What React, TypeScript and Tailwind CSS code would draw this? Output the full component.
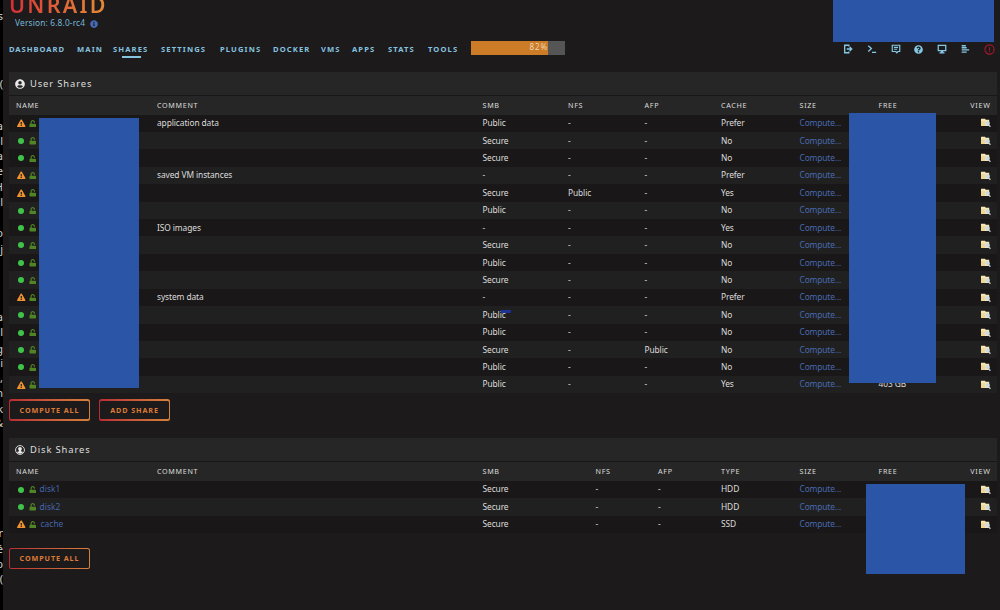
import { FaExclamationTriangle, FaQuestionCircle, FaUnlock, FaUserCircle, FaInfoCircle } from "react-icons/fa"

type Share = {
  name?: string
  warn?: boolean
  comment?: string
  smb: string
  nfs?: string
  afp?: string
  cache: string
  free?: string
}

const userShares: Share[] = [
  { warn: true, comment: "application data", smb: "Public", cache: "Prefer" },
  { smb: "Secure", cache: "No" },
  { smb: "Secure", cache: "No" },
  { warn: true, comment: "saved VM instances", smb: "-", cache: "Prefer" },
  { warn: true, smb: "Secure", nfs: "Public", cache: "Yes" },
  { smb: "Public", cache: "No" },
  { comment: "ISO images", smb: "-", cache: "Yes" },
  { smb: "Secure", cache: "No" },
  { smb: "Public", cache: "No" },
  { smb: "Secure", cache: "No" },
  { warn: true, comment: "system data", smb: "-", cache: "Prefer" },
  { smb: "Public", cache: "No" },
  { smb: "Public", cache: "No" },
  { smb: "Secure", afp: "Public", cache: "No" },
  { smb: "Public", cache: "No" },
  { warn: true, smb: "Public", cache: "Yes", free: "403 GB" },
]

const diskShares: Share[] = [
  { name: "disk1", smb: "Secure", cache: "HDD" },
  { name: "disk2", smb: "Secure", cache: "HDD" },
  { name: "cache", warn: true, smb: "Secure", cache: "SSD" },
]

const nav = [
  { label: "DASHBOARD", width: "w-[68px] tracking-[0.950px]" },
  { label: "MAIN", width: "w-[36px]" },
  { label: "SHARES", width: "w-[48px]" },
  { label: "SETTINGS", width: "w-[59px]" },
  { label: "PLUGINS", width: "w-[53px]" },
  { label: "DOCKER", width: "w-[48px]" },
  { label: "VMS", width: "w-[31px]" },
  { label: "APPS", width: "w-[36px]" },
  { label: "STATS", width: "w-[40px]" },
  { label: "TOOLS", width: "w-[43px]" },
]

const userColumns = "grid-cols-[148px_325.500px_85.500px_76.500px_76.500px_78.500px_79px_auto_18px]"
const diskColumns = "grid-cols-[148px_325.500px_113px_62.500px_63px_78.500px_79px_auto_18px]"

// Pieces of the window behind that stick out at the left edge
const edgeText = [
  { y: "mt-[9px]", t: "s" },
  { y: "mt-[54.500px]", t: "(" },
  { y: "mt-[28.500px]", t: "a" },
  { y: "mt-[1.500px]", t: "l" },
  { y: "mt-[1.500px]", t: "a" },
  { y: "mt-[1.500px]", t: "e" },
  { y: "mt-[2.500px]", t: "H" },
  { y: "mt-[1.500px]", t: "l" },
  { y: "mt-[17.500px]", t: "o" },
  { y: "mt-[2.500px]", t: "j" },
  { y: "mt-[54.500px]", t: "a" },
  { y: "mt-[1.500px]", t: "l" },
  { y: "mt-[3.500px]", t: "g" },
  { y: "mt-[0.500px]", t: "i" },
  { y: "mt-[1.500px]", t: "," },
  { y: "mt-[1.500px]", t: "n" },
  { y: "mt-[2.500px]", t: "k" },
  { y: "mt-[0.500px]", t: "&" },
  { y: "mt-[96.500px]", t: "r" },
  { y: "mt-[2.500px]", t: "é" },
  { y: "mt-[1.500px]", t: "b" },
  { y: "mt-[1.500px]", t: "(" },
]

function FolderIcon() {
  return (
    <svg viewBox="0 0 11 10" className="h-[10px] w-[11px]">
      <path d="M1 .8h4l.8.9h3.400v6.300H1z" fill="#f5e6b4" />
      <path d="M1 3.200h4.200V8H1z" fill="#f0d694" />
      <circle cx="7.300" cy="5.200" r="2.100" fill="#c9dbe0" stroke="#e2e3dc" strokeWidth=".7" />
      <path d="M8.600 6.800l1.800 1.900" stroke="#c4c7d2" strokeWidth="1.300" />
    </svg>
  )
}

function DiskUserIcon() {
  return (
    <svg viewBox="0 0 20 20" className="size-[10px]">
      <circle cx="10" cy="10" r="8.900" fill="none" stroke="#e8e8e8" strokeWidth="1.800" />
      <path d="M10 4c2.400 0 3.700 1.500 3.700 3.700 0 1.600-.8 3-1.700 3.700v1.100l4 1.700c-1 2-3.200 3.300-6 3.300s-5-1.300-6-3.300l4-1.700v-1.100c-.9-.7-1.700-2.100-1.700-3.700C6.300 5.500 7.600 4 10 4z" fill="#e8e8e8" />
    </svg>
  )
}

function ShareTable({ title, disk, rows }: { title: string; disk?: boolean; rows: Share[] }) {
  const columns = disk ? diskColumns : userColumns
  return (
    <section className="w-[988px]">
      <div className="flex h-[24px] items-center gap-[5px] border-b border-[#171717] bg-[#262626] pl-[6px]">
        {disk ? <DiskUserIcon /> : <FaUserCircle className="size-[10px] text-[#e8e8e8]" />}
        <h2 className={`text-[9.400px] tracking-[0.880px] text-[#dedede] ${disk ? "" : "pt-[1px]"}`}>{title}</h2>
      </div>
      <div className={`grid h-[18.500px] items-center bg-[#262626] pr-[6.500px] text-[7.200px] tracking-[0.680px] text-[#dcdcdc] ${columns} ${disk ? "" : "pt-[1px]"}`}>
        <span className="pl-[7px]">NAME</span>
        <span>COMMENT</span>
        <span>SMB</span>
        <span>NFS</span>
        <span>AFP</span>
        <span>{disk ? "TYPE" : "CACHE"}</span>
        <span>SIZE</span>
        <span>FREE</span>
        <span className="justify-self-end">VIEW</span>
      </div>
      {rows.map((row, i) => (
        <div
          key={i}
          className={`grid h-[17.430px] items-center pt-[0.500px] pr-[6.500px] text-[8.400px] tracking-[-0.090px] text-[#dcdcdc] ${columns} ${i % 2 ? "bg-[#202020]" : "bg-[#191717]"}`}
        >
          <span className="flex items-center pl-[8px]">
            {row.warn ? (
              <FaExclamationTriangle className="size-[8.500px] text-[#f0922f]" />
            ) : (
              <i className="ml-[1px] size-[6px] rounded-full bg-[#3fc44a]" />
            )}
            <FaUnlock className={`size-[7.500px] text-[#4f8524] ${row.warn ? "ml-[3.500px]" : "ml-[4.500px]"}`} />
            {row.name && (
              <a className={`tracking-[0.050px] text-[#4464aa] ${row.warn ? "ml-[4px]" : "ml-[3.500px]"}`}>{row.name}</a>
            )}
          </span>
          <span>{row.comment}</span>
          <span>{row.smb}</span>
          <span>{row.nfs ?? "-"}</span>
          <span>{row.afp ?? "-"}</span>
          <span>{row.cache}</span>
          <a className="tracking-[-0.140px] text-[#486ab0]">Compute...</a>
          <span>{row.free}</span>
          <span className="justify-self-end"><FolderIcon /></span>
        </div>
      ))}
    </section>
  )
}

function OutlineButton({ label, width }: { label: string; width: string }) {
  return (
    <button className={`h-[21.500px] rounded-[2.500px] bg-linear-to-r from-[#b92b35] to-[#d5813c] p-[1.400px] ${width}`}>
      <span className="flex h-full items-center justify-center rounded-[1.500px] bg-[#1c1a1a] text-[7.200px] font-bold tracking-[0.900px] text-[#dc7b38]">
        {label}
      </span>
    </button>
  )
}

function ToolIcons() {
  return (
    <div className="mr-[5.500px] ml-auto flex items-center text-[#86c9e6]">
      <svg viewBox="0 0 12 12" className="mr-[14px] size-[10px]" fill="none" stroke="currentColor" strokeWidth="1.600">
        <path d="M7 3V1.500H2v9h5V9M4.500 6h6M8 3.500L10.500 6 8 8.500" />
      </svg>
      <svg viewBox="0 0 12 12" className="mr-[14px] size-[10px]" fill="none" stroke="currentColor" strokeWidth="1.600">
        <path d="M1.500 2l3.800 3.500L1.500 9M6 10h5" />
      </svg>
      <svg viewBox="0 0 12 12" className="mr-[13px] size-[10px]" fill="none" stroke="currentColor" strokeWidth="1.400">
        <path d="M1.500 1.500h9V9H8.300L7 10.500 5.700 9H1.500zM3.500 4h5M3.500 6.300h4" />
      </svg>
      <FaQuestionCircle className="mr-[14px] size-[9px]" />
      <svg viewBox="0 0 12 12" className="mr-[13px] size-[10px]" fill="none" stroke="currentColor" strokeWidth="1.500">
        <path d="M1.500 1.500h9v6.300h-9zM3 10.500h6M4.500 9h3" />
      </svg>
      <svg viewBox="0 0 12 12" className="mr-[14px] size-[10px]" fill="none" stroke="currentColor" strokeWidth="1.700">
        <path d="M2 2h5M2 4.500h6M2 7h9M2 9.700h6" />
      </svg>
      <svg viewBox="0 0 12 12" className="size-[11px] text-[#a5182b]" fill="none" stroke="currentColor" strokeWidth="1.200">
        <circle cx="6" cy="6" r="5" />
        <path d="M6 3.500v3.500M6 7.800v1" />
      </svg>
    </div>
  )
}

export default function App() {
  return (
    <div className="relative flex h-[610px] w-[1000px] overflow-hidden bg-[#1c1a1a] font-['Noto_Sans','Open_Sans',sans-serif]">
      <div className="flex w-[3px] shrink-0 flex-col items-end overflow-hidden bg-black text-[11px] text-[#d0d0d0]">
        {edgeText.map((e, i) => (
          <span key={i} className={`h-[13.500px] shrink-0 leading-[13.500px] ${e.y}`}>{e.t}</span>
        ))}
      </div>

      <main className="flex w-[997px] shrink-0 flex-col pl-[6px]">
        <header className="h-[62px] shrink-0 overflow-hidden">
          <div className="-mt-[5px] h-[21px] w-[97px] bg-linear-to-r from-[#d52b38] to-[#e58a36] bg-clip-text text-[21.500px] leading-[20px] font-semibold tracking-[2.300px] text-transparent">
            UNRAID
          </div>
          <div className="flex h-[15px] items-center gap-[5px] pl-[6px] text-[8.400px] tracking-[0.150px] text-[#75b7d8]">
            Version: 6.8.0-rc4 <FaInfoCircle className="size-[8px] text-[#4669b8]" />
          </div>
          <div className="mt-[8px] flex h-[20px] items-center">
            <nav className="flex pt-[1px] text-[7.600px] font-bold tracking-[1.120px] text-[#86c3e0]">
              {nav.map((item) => (
                <a key={item.label} className={`relative ${item.width}`}>
                  {item.label}
                  {item.label === "SHARES" && (
                    <i className="absolute top-[12.500px] left-[9px] h-[1.500px] w-[19px] bg-[#86c3e0]" />
                  )}
                </a>
              ))}
            </nav>
            <div className="-mt-[2px] h-[14px] w-[94px] bg-[#555]">
              <div className="h-full w-[77px] bg-[#cc7b26] text-right text-[8px] leading-[12px] tracking-[0.900px] text-[#f0d5b5]">
                82%
              </div>
            </div>
            <ToolIcons />
          </div>
        </header>

        <div className="pt-[10px]">
          <ShareTable title="User Shares" rows={userShares} />
        </div>
        <div className="flex h-[45px] gap-[9px] pt-[6px]">
          <OutlineButton label="COMPUTE ALL" width="w-[81px]" />
          <OutlineButton label="ADD SHARE" width="w-[71px]" />
        </div>
        <ShareTable title="Disk Shares" disk rows={diskShares} />
        <div className="flex pt-[14.500px]">
          <OutlineButton label="COMPUTE ALL" width="w-[81px]" />
        </div>
      </main>

      {/* Redaction blocks */}
      <div className="absolute top-0 left-[833px] h-[41.500px] w-[161px] bg-[#2b56a7]" />
      <div className="absolute top-[118px] left-[39px] h-[270px] w-[99.500px] bg-[#2b56a7]" />
      <div className="absolute top-[113px] left-[849px] h-[270px] w-[86.500px] bg-[#2b56a7]" />
      <div className="absolute top-[484px] left-[866px] h-[90px] w-[99px] bg-[#2b56a7]" />
      <div className="absolute top-[310px] left-[501px] h-[3px] w-[10px] rounded-[1px] bg-[#1d3196]" />
    </div>
  )
}
